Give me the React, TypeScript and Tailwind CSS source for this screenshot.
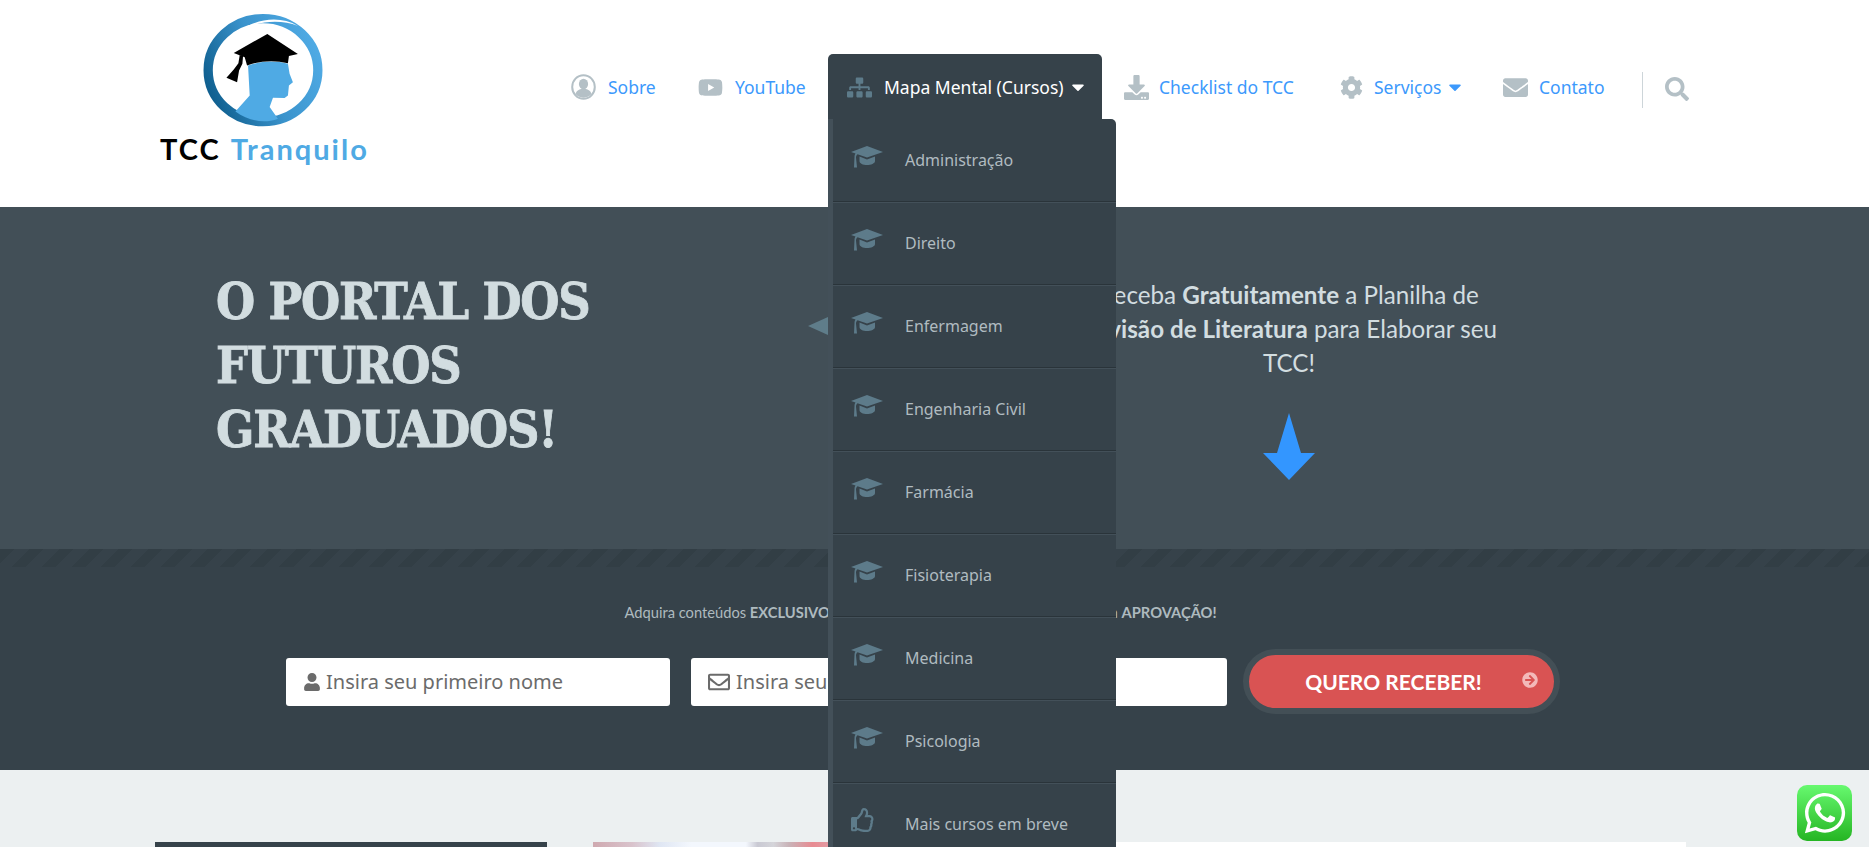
import { FaArrowCircleRight, FaCaretDown, FaCog, FaDownload, FaEnvelope, FaRegEnvelope, FaRegThumbsUp, FaSearch, FaSitemap, FaUser, FaWhatsapp, FaYoutube } from "react-icons/fa";

const courses = ["Administração", "Direito", "Enfermagem", "Engenharia Civil", "Farmácia", "Fisioterapia", "Medicina", "Psicologia"];

function Logo() {
    return (
        <div className="ml-[155px] w-[396px] shrink-0 pt-[14px]">
            <svg viewBox="220 40 360 340" className="ml-[48px] h-[113px] w-[120px]">
                <defs>
                    <linearGradient id="ring" x1="0" y1="0.7" x2="1" y2="0.3">
                        <stop offset="0" stopColor="#0f5f8f" />
                        <stop offset="0.5" stopColor="#3a93cc" />
                        <stop offset="1" stopColor="#4faae4" />
                    </linearGradient>
                </defs>
                <ellipse cx="400" cy="209" rx="165" ry="155" fill="none" stroke="url(#ring)" strokeWidth="28" />
                <path d="M335 86 C390 52 455 46 505 76 C455 56 392 60 335 86Z" fill="#fff" />
                <path d="M355 195 C395 180 440 180 475 190 L480 220 L490 245 L478 255 L475 285 L465 293 L430 292 L420 320 L445 355 C400 372 355 360 317 333 L360 285Z" fill="#4faae4" />
                <path d="M413 100 L505 160 L478 166 L475 188 C435 178 390 180 352 195 L345 170 L312 157Z" fill="#000" />
                <path d="M330 163 L340 166 L338 190 L328 210 L322 245 L290 232 L312 207 L326 188Z" fill="#000" />
            </svg>
            <div className="mt-[6px] ml-[5px] flex gap-[10px] font-['Lato',sans-serif] text-[29px] leading-[32px] font-bold tracking-[2px]">
                <span className="text-black">TCC</span>
                <span className="text-[#4faae4]">Tranquilo</span>
            </div>
        </div>
    );
}

function UserRing() {
    return (
        <svg viewBox="0 0 25 26" className="h-[26px] w-[25px] shrink-0 text-[#b4c0c6]">
            <ellipse cx="12.5" cy="13" rx="11.3" ry="11.8" fill="none" stroke="currentColor" strokeWidth="2" />
            <ellipse cx="12.5" cy="10" rx="4.6" ry="5.2" fill="currentColor" />
            <path d="M4.5 20 C5.5 16.5 8 15.5 10 15 L15 15 C17 15.5 19.5 16.5 20.5 20 C16 25 9 25 4.5 20Z" fill="currentColor" />
        </svg>
    );
}

function Header() {
    const linkClass = "flex h-[65px] shrink-0 items-center pt-[1px] text-[#3c99fc]";
    const iconClass = "shrink-0 text-[25px] text-[#b4c0c6]";

    return (
        <header className="flex h-[207px] bg-white font-['Noto_Sans',sans-serif] text-[17.5px]">
            <Logo />
            <nav className="relative mt-[54px] flex h-[65px] items-center">
                <a className={`${linkClass} w-[127px] gap-[12px] pl-[20px]`}><UserRing />Sobre</a>
                <a className={`${linkClass} w-[150px] gap-[12px] pl-[20px]`}><FaYoutube className={iconClass} />YouTube</a>
                <a className="flex h-[65px] w-[274px] shrink-0 items-center gap-[12px] rounded-t-[5px] bg-[#36424a] pt-[1px] pl-[19px] text-white">
                    <FaSitemap className="text-[25px] text-[#5d7b8a]" />
                    Mapa Mental (Cursos)
                    <FaCaretDown className="-ml-[8px] text-[20px]" />
                </a>
                <a className={`${linkClass} w-[218px] gap-[10px] pl-[22px]`}><FaDownload className={iconClass} />Checklist do TCC</a>
                <a className={`${linkClass} w-[163px] gap-[11px] pl-[20px]`}><FaCog className="text-[23px] text-[#b4c0c6]" />Serviços<FaCaretDown className="-ml-[7px] text-[20px]" /></a>
                <a className={`${linkClass} w-[159px] gap-[11px] pl-[20px]`}><FaEnvelope className={iconClass} />Contato</a>
                <div className="mt-[6px] h-[36px] w-px bg-[#cdd5d9]" />
                <FaSearch className="mt-[4px] ml-[22px] text-[24px] text-[#b4c0c6]" />
                <Dropdown />
            </nav>
        </header>
    );
}

function CapIcon() {
    return (
        <svg viewBox="0 0 32 22" className="h-[22px] w-[32px] shrink-0 text-[#5d7b8a]" fill="currentColor">
            <path d="M16 0 L32 6 L16 11.5 L6.5 8.2 C5.5 9 5 10 5 11.5 L6 21.5 H3 L3.5 11 C3.5 9.5 3.8 8.5 4.5 7.5 L0 6Z" />
            <path d="M8.5 10.5 L16 13.5 L24 10.5 V15 C24 17.5 20 19 16 19 C12 19 8.5 17.5 8.5 15Z" />
        </svg>
    );
}

function Dropdown() {
    return (
        <ul className="absolute top-[65px] left-[277px] z-20 w-[288px] rounded-tr-[5px] border-l-[5px] border-[#435059] bg-[#36424a] text-[16px] text-[#b0bbc0]">
            {courses.map((course) => (
                <li key={course} className="flex h-[83px] items-start gap-[22px] border-b border-[#2a343a] pt-[27px] pl-[18px] shadow-[0_1px_0_#435059]">
                    <CapIcon />
                    <span className="pt-[2px]">{course}</span>
                </li>
            ))}
            <li className="flex h-[83px] items-start gap-[22px] pt-[25px] pl-[18px]">
                <FaRegThumbsUp className="-ml-[4px] w-[32px] shrink-0 text-[24px] text-[#5d7b8a]" />
                <span className="pt-[4px] pl-[4px]">Mais cursos em breve</span>
            </li>
        </ul>
    );
}

function Hero() {
    return (
        <section className="flex h-[342px] bg-[#424f57]">
            <h1 className="ml-[216px] w-[592px] shrink-0 pt-[63px] font-['DejaVu_Serif_Condensed','DejaVu_Serif',serif] text-[50px] leading-[64px] font-bold tracking-[-1.2px] text-[#d2dde0] [-webkit-text-stroke:0.8px_#d2dde0]">
                O PORTAL DOS<br />FUTUROS<br />GRADUADOS!
            </h1>
            <svg viewBox="0 0 90 18" className="mt-[110px] h-[18px] w-[90px] shrink-0">
                <path d="M0 9 L20 0 H90 V18 H20Z" fill="#5f7d8a" />
            </svg>
            <div className="w-[782px] shrink-0 pt-[71px] text-center font-['Lato',sans-serif] text-[24.2px] leading-[34px] text-[#d2dde0]">
                <p>
                    Receba <b>Gratuitamente</b> a Planilha de<br />
                    <b>Revisão de Literatura</b> para Elaborar seu<br />
                    TCC!
                </p>
                <svg viewBox="0 0 52 67" className="mx-auto mt-[33px] h-[67px] w-[52px]">
                    <path d="M26 0 L38 40 H52 L26 67 L0 40 H14Z" fill="#3396ff" />
                </svg>
            </div>
        </section>
    );
}

function SignupForm() {
    return (
        <section className="h-[221px] bg-[#36424a] font-['Lato',sans-serif]">
            <div className="h-[18px] bg-[repeating-linear-gradient(135deg,#323e45_0,#323e45_10px,#36424a_10px,#36424a_21px)]" />
            <div className="ml-[286px] w-[1274px]">
                <p className="pt-[35px] pr-[5px] text-center text-[14.7px] leading-[20px] text-[#aebabf]">
                    Adquira conteúdos <b>EXCLUSIVOS</b> e gratuitos que vão te ajudar a conquistar a <b>APROVAÇÃO!</b>
                </p>
                <div className="mt-[27px] flex items-center font-['Noto_Sans',sans-serif] text-[20px] text-[#6b6b6b]">
                    <label className="flex h-[48px] w-[384px] items-center gap-[5px] rounded-[3px] bg-white pl-[17px]">
                        <FaUser className="text-[18px]" />Insira seu primeiro nome
                    </label>
                    <label className="ml-[21px] flex h-[48px] w-[536px] items-center gap-[6px] rounded-[3px] bg-white pl-[17px]">
                        <FaRegEnvelope className="text-[22px]" />Insira seu melhor e-mail
                    </label>
                    <button className="relative ml-[16px] h-[65px] w-[317px] rounded-full border-[6px] border-[#434f56] bg-[#d95353] font-['Lato',sans-serif] text-[21px] font-bold text-white">
                        <span className="mr-[16px]">QUERO RECEBER!</span>
                        <FaArrowCircleRight className="absolute top-[17px] right-[16px] text-[16px] text-[#f3b9b9]" />
                    </button>
                </div>
            </div>
        </section>
    );
}

export default function App() {
    return (
        <div className="relative h-screen overflow-hidden bg-[#ecf0f1]">
            <Header />
            <Hero />
            <SignupForm />
            <div className="flex pt-[72px] pl-[155px]">
                <div className="h-[40px] w-[392px] bg-[#36424a]" />
                <div className="ml-[46px] h-[40px] w-[392px] bg-[linear-gradient(90deg,#cfa9b0_0%,#d9c3cc_10%,#dfe6f3_17%,#f3f7fd_25%,#f3f7fd_39%,#c9c9d3_42%,#d5d5da_46%,#c9b3b8_50%,#e88b92_56%,#e49aa2_60%,#e9edf2_80%)]" />
                <div className="ml-[46px] h-[40px] w-[655px] bg-white" />
            </div>
            <a className="absolute top-[785px] left-[1797px] flex h-[56px] w-[55px] items-center justify-center rounded-[10px] bg-[linear-gradient(180deg,#67f96f,#25b523)] text-[46px] text-white">
                <FaWhatsapp />
            </a>
        </div>
    );
}
